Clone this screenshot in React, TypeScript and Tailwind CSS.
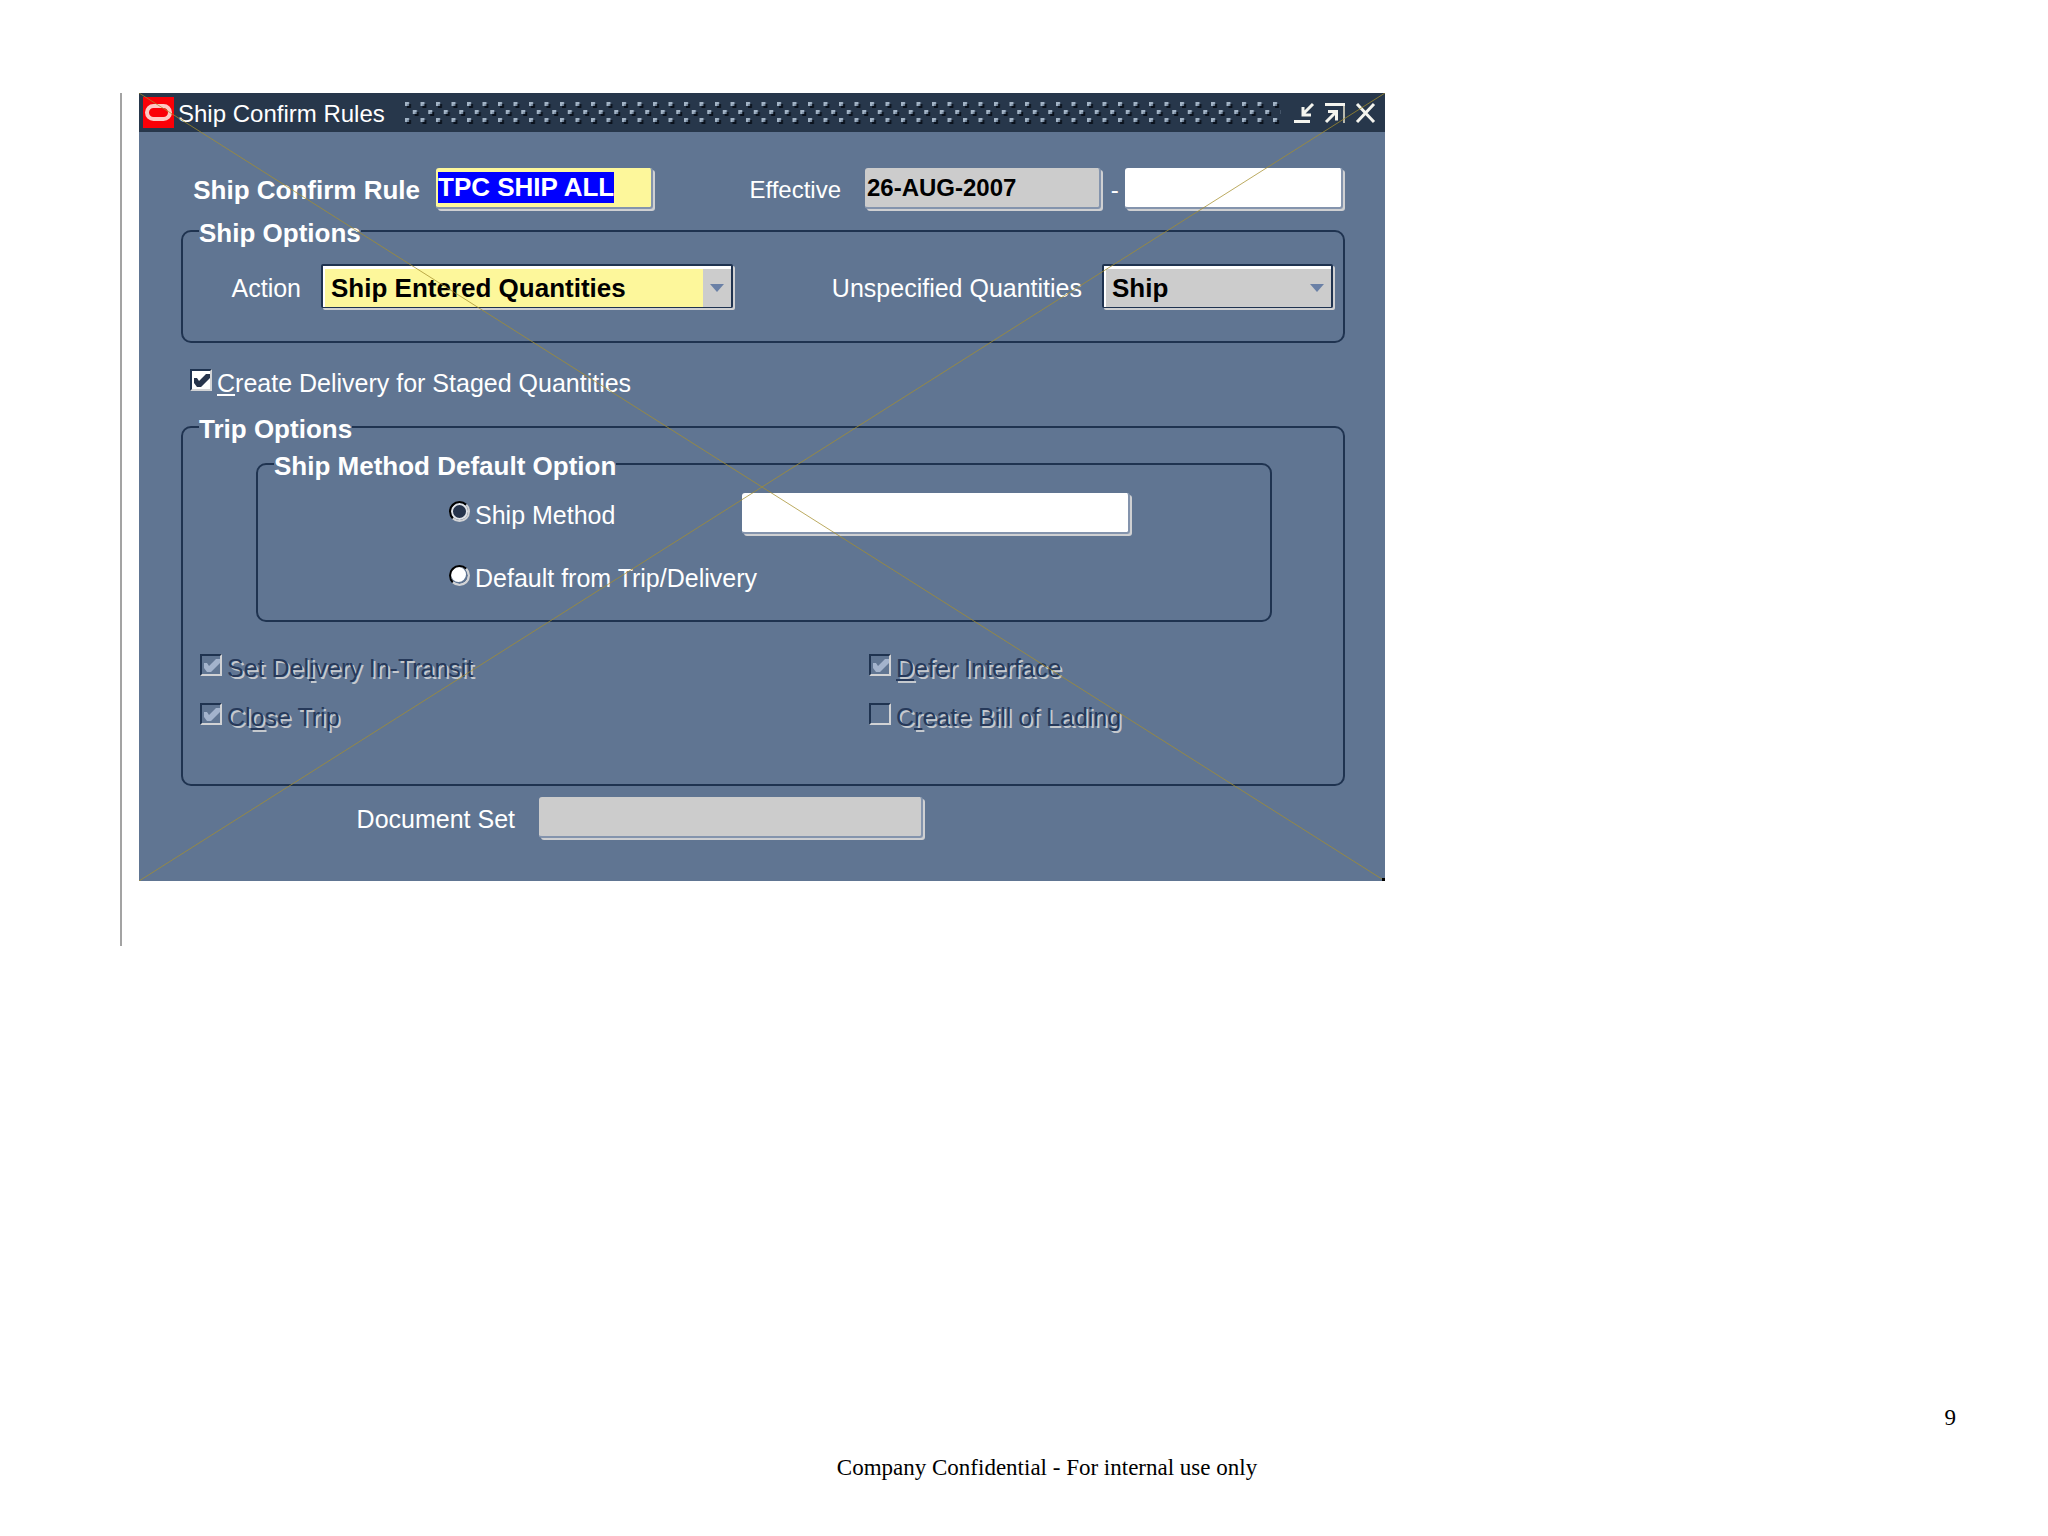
import React, { useEffect, useRef } from "react";

const fieldBase =
  "h-[41px] min-w-0 w-full rounded-[3px] border-0 border-r-2 border-b-2 border-[#8494ad] pl-[2px] font-bold text-black outline-none shadow-[2px_2px_0_#cfd0d2]";

function Legend({ children }: { children: React.ReactNode }) {
  return (
    <legend className="pt-1 text-[26px] leading-6 font-bold whitespace-nowrap text-white">
      {children}
    </legend>
  );
}

function Tick({ color }: { color: string }) {
  return (
    <svg viewBox="0 0 22 22" className="pointer-events-none absolute inset-0 size-[22px]" aria-hidden="true">
      <path d="M4 9h3l2 3 7-7h4v4l-9 9H7l-3-4z" fill={color} />
    </svg>
  );
}

function Check({
  id,
  label,
  checked,
  disabled,
}: {
  id: string;
  label: React.ReactNode;
  checked?: boolean;
  disabled?: boolean;
}) {
  return (
    <div className="flex h-7 items-center gap-[5px]">
      <span className="relative mb-1 size-[22px] shrink-0">
        <input
          id={id}
          type="checkbox"
          defaultChecked={checked}
          disabled={disabled}
          className="block size-[22px] appearance-none border-2 border-t-[#1f3350] border-l-[#1f3350] border-r-[#d2d3d5] border-b-[#d2d3d5] bg-white disabled:bg-transparent"
        />
        {checked && <Tick color={disabled ? "#a3b3cc" : "#26344c"} />}
      </span>
      <label
        htmlFor={id}
        className={
          disabled
            ? "pt-[2px] text-[25px] leading-7 whitespace-nowrap text-[#26395a] [text-shadow:2px_2px_0_#c5c9ce]"
            : "pt-[2px] text-[25px] leading-7 whitespace-nowrap text-white"
        }
      >
        {label}
      </label>
    </div>
  );
}

function Key({ children }: { children: React.ReactNode }) {
  return <span className="underline decoration-2 underline-offset-2">{children}</span>;
}

function Radio({ id, label, checked }: { id: string; label: string; checked?: boolean }) {
  return (
    <div className="flex h-7 items-center gap-[5px]">
      <input
        id={id}
        type="radio"
        name="ship-method-default"
        defaultChecked={checked}
        className="mb-1 block size-[21px] shrink-0 appearance-none rounded-full border-2 border-t-black border-l-black border-r-[#d2d3d5] border-b-[#d2d3d5] bg-white shadow-[inset_-1px_-1px_0_1px_#607592] checked:bg-[#26344c] checked:shadow-[inset_0_0_0_2px_#dfe3e8]"
      />
      <label htmlFor={id} className="pt-[2px] text-[25px] leading-7 whitespace-nowrap text-white">
        {label}
      </label>
    </div>
  );
}

function Select({ id, value, tone }: { id: string; value: string; tone: "yellow" | "grey" }) {
  return (
    <div className="relative h-11 min-w-0 rounded-[2px] border-2 border-b-[1px] border-[#1f3350] shadow-[2px_2px_0_#cfd0d2]">
      <select
        id={id}
        defaultValue={value}
        className={
          tone === "yellow"
            ? "block h-full w-full appearance-none border-t-[3px] border-l-2 border-white bg-[#fdf79b] pb-px pl-[6px] text-[26px] leading-8 font-bold text-black outline-none"
            : "block h-full w-full appearance-none border-t-[3px] border-l-2 border-white bg-[#cccccc] pb-px pl-[6px] text-[26px] leading-8 font-bold text-black outline-none"
        }
      >
        <option>{value}</option>
      </select>
      <span className="pointer-events-none absolute top-[3px] right-0 bottom-0 flex w-7 items-center justify-center bg-[#cccccc]">
        <svg viewBox="0 0 14 8" className="h-2 w-[14px]" aria-hidden="true">
          <path d="M0 0h14L7 8z" fill="#6a80a6" />
        </svg>
      </span>
    </div>
  );
}

function TitleBar() {
  return (
    <header className="flex h-[39px] items-center bg-[#27374b] pr-2 pl-1">
      <svg viewBox="0 0 31 31" className="size-[31px] shrink-0" aria-label="Oracle" role="img">
        <rect width="31" height="31" fill="#fb0007" />
        <rect x="4" y="9" width="23" height="13" rx="6.5" fill="none" stroke="#ffc9c4" strokeWidth="4" />
      </svg>
      <h1 className="ml-1 pt-[2px] text-2xl leading-7 whitespace-nowrap text-white">Ship Confirm Rules</h1>
      <svg className="ml-5 h-[22px] min-w-0 flex-1" aria-hidden="true">
        <defs>
          <g id="stud">
            <rect x="2" y="2" width="4" height="4" fill="#0a111c" />
            <rect width="4" height="4" fill="#74879c" />
            <path d="M0 0h4v2H2v2H0z" fill="#a3b4c6" />
          </g>
          <pattern id="studs" width="15.5" height="22" patternUnits="userSpaceOnUse">
            <use href="#stud" x="0" y="0" />
            <use href="#stud" x="7.75" y="8" />
            <use href="#stud" x="0" y="16" />
          </pattern>
        </defs>
        <rect width="100%" height="22" fill="url(#studs)" />
      </svg>
      <div className="ml-3 flex shrink-0 gap-[9px]">
        <button type="button" aria-label="Minimize" className="size-[22px]">
          <svg viewBox="0 0 22 22" fill="none">
            <path d="M1 19.5h16" stroke="#f4f4ee" strokeWidth="3" />
            <path d="M20 2l-9 9M10 5v8h8" stroke="#f4f4ee" strokeWidth="3" />
          </svg>
        </button>
        <button type="button" aria-label="Restore" className="size-[22px]">
          <svg viewBox="0 0 22 22" fill="none">
            <path d="M1 2.5h20" stroke="#f4f4ee" strokeWidth="3" />
            <path d="M20 4v17" stroke="#b9b9ae" strokeWidth="2" />
            <path d="M2 20l9-9M4 9.500h8.500v9" stroke="#f4f4ee" strokeWidth="3" />
          </svg>
        </button>
        <button type="button" aria-label="Close" className="size-[22px]">
          <svg viewBox="0 0 22 22" fill="none">
            <path d="M2 2l17 18M19 2L2 20" stroke="#f4f4ee" strokeWidth="3" />
          </svg>
        </button>
      </div>
    </header>
  );
}

export default function App() {
  const rule = useRef<HTMLInputElement>(null);
  useEffect(() => {
    rule.current?.focus();
    rule.current?.select();
  }, []);

  return (
    <div className="flex min-h-screen flex-col bg-white font-['Liberation_Sans',Arial,sans-serif]">
      <main className="mt-[93px] mr-6 ml-[120px] border-l-2 border-[#a3a3a3] pb-[65px] pl-[17px]">
        <section className="relative w-full max-w-[1246px] bg-[#607592]">
          <TitleBar />
          <form className="pt-9 pr-10 pb-[43px] pl-[42px]">
            <div className="grid grid-cols-[239fr_217fr_180fr_480fr] items-center gap-x-4">
              <label htmlFor="rule" className="pt-[2px] text-right text-[26px] leading-7 font-bold whitespace-nowrap text-white">
                Ship Confirm Rule
              </label>
              <input
                id="rule"
                ref={rule}
                defaultValue="TPC SHIP ALL"
                className={`${fieldBase} bg-[#fdf79b] text-[26px] selection:bg-[#0000ff] selection:text-white`}
              />
              <label htmlFor="from" className="pt-[2px] pr-2 text-right text-2xl leading-7 text-white">
                Effective
              </label>
              <div className="flex items-center pr-[2px]">
                <input id="from" readOnly defaultValue="26-AUG-2007" className={`${fieldBase} flex-[237] bg-[#cccccc] text-2xl`} />
                <span className="w-6 shrink-0 pt-[2px] pl-1 text-center text-2xl leading-7 text-white">-</span>
                <input aria-label="Effective to" className={`${fieldBase} flex-[219] bg-white text-2xl`} />
              </div>
            </div>

            <fieldset className="mt-2 rounded-[10px] border-2 border-[#1f3350] pt-[19px] pr-[10px] pb-[33px] pl-4">
              <Legend>Ship Options</Legend>
              <div className="grid grid-cols-[106fr_412fr_337fr_231fr] items-center gap-x-4">
                <label htmlFor="action" className="pt-1 pr-1 text-right text-[25px] leading-7 text-white">
                  Action
                </label>
                <Select id="action" value="Ship Entered Quantities" tone="yellow" />
                <label htmlFor="unspecified" className="pt-1 pr-1 text-right text-[25px] leading-7 whitespace-nowrap text-white">
                  Unspecified Quantities
                </label>
                <Select id="unspecified" value="Ship" tone="grey" />
              </div>
            </fieldset>

            <div className="mt-[25px] ml-[9px]">
              <Check
                id="staged"
                checked
                label={
                  <>
                    <Key>C</Key>reate Delivery for Staged Quantities
                  </>
                }
              />
            </div>

            <fieldset className="mt-[17px] rounded-[10px] border-2 border-[#1f3350] px-4 pt-[9px] pb-[54px]">
              <Legend>Trip Options</Legend>
              <fieldset className="mr-[55px] ml-[57px] rounded-[10px] border-2 border-[#1f3350] pt-[15px] pr-[140px] pb-[29px] pl-4">
                <Legend>Ship Method Default Option</Legend>
                <div className="grid grid-cols-[468fr_388fr] items-center">
                  <div className="pl-[175px]">
                    <Radio id="method" label="Ship Method" checked />
                  </div>
                  <input aria-label="Ship Method value" className={`${fieldBase} bg-white text-2xl`} />
                </div>
                <div className="mt-[29px] pl-[175px]">
                  <Radio id="default" label="Default from Trip/Delivery" />
                </div>
              </fieldset>
              <div className="mt-[31px] ml-px grid grid-cols-[669fr_458fr] gap-y-[21px]">
                <Check
                  id="transit"
                  checked
                  disabled
                  label={
                    <>
                      Set Del<Key>i</Key>very In-Transit
                    </>
                  }
                />
                <Check
                  id="defer"
                  checked
                  disabled
                  label={
                    <>
                      <Key>D</Key>efer Interface
                    </>
                  }
                />
                <Check
                  id="close"
                  checked
                  disabled
                  label={
                    <>
                      Cl<Key>o</Key>se Trip
                    </>
                  }
                />
                <Check
                  id="lading"
                  disabled
                  label={
                    <>
                      C<Key>r</Key>eate Bill of Lading
                    </>
                  }
                />
              </div>
            </fieldset>

            <div className="mt-[11px] grid grid-cols-[334fr_384fr_398fr] items-center gap-x-6">
              <label htmlFor="docset" className="pt-[2px] text-right text-[25px] leading-7 text-white">
                Document Set
              </label>
              <input id="docset" readOnly className={`${fieldBase} bg-[#cccccc] text-2xl`} />
            </div>
          </form>
          <svg
            className="pointer-events-none absolute inset-0 h-full w-full"
            viewBox="0 0 100 100"
            preserveAspectRatio="none"
            aria-hidden="true"
          >
            <path d="M0 0L100 100M100 0L0 100" stroke="#a68f2c" strokeOpacity="0.75" vectorEffect="non-scaling-stroke" />
          </svg>
          <span className="absolute right-0 bottom-0 size-[3px] bg-black" />
        </section>
      </main>

      <footer className="mt-auto pr-[74px] pb-[52px] pl-[120px] font-['Palatino_Linotype',Palatino,'Liberation_Serif',serif] text-[23px] leading-8 text-black">
        <p className="pr-[18px] text-right">9</p>
        <p className="mt-[18px] text-center">Company Confidential - For internal use only</p>
      </footer>
    </div>
  );
}
